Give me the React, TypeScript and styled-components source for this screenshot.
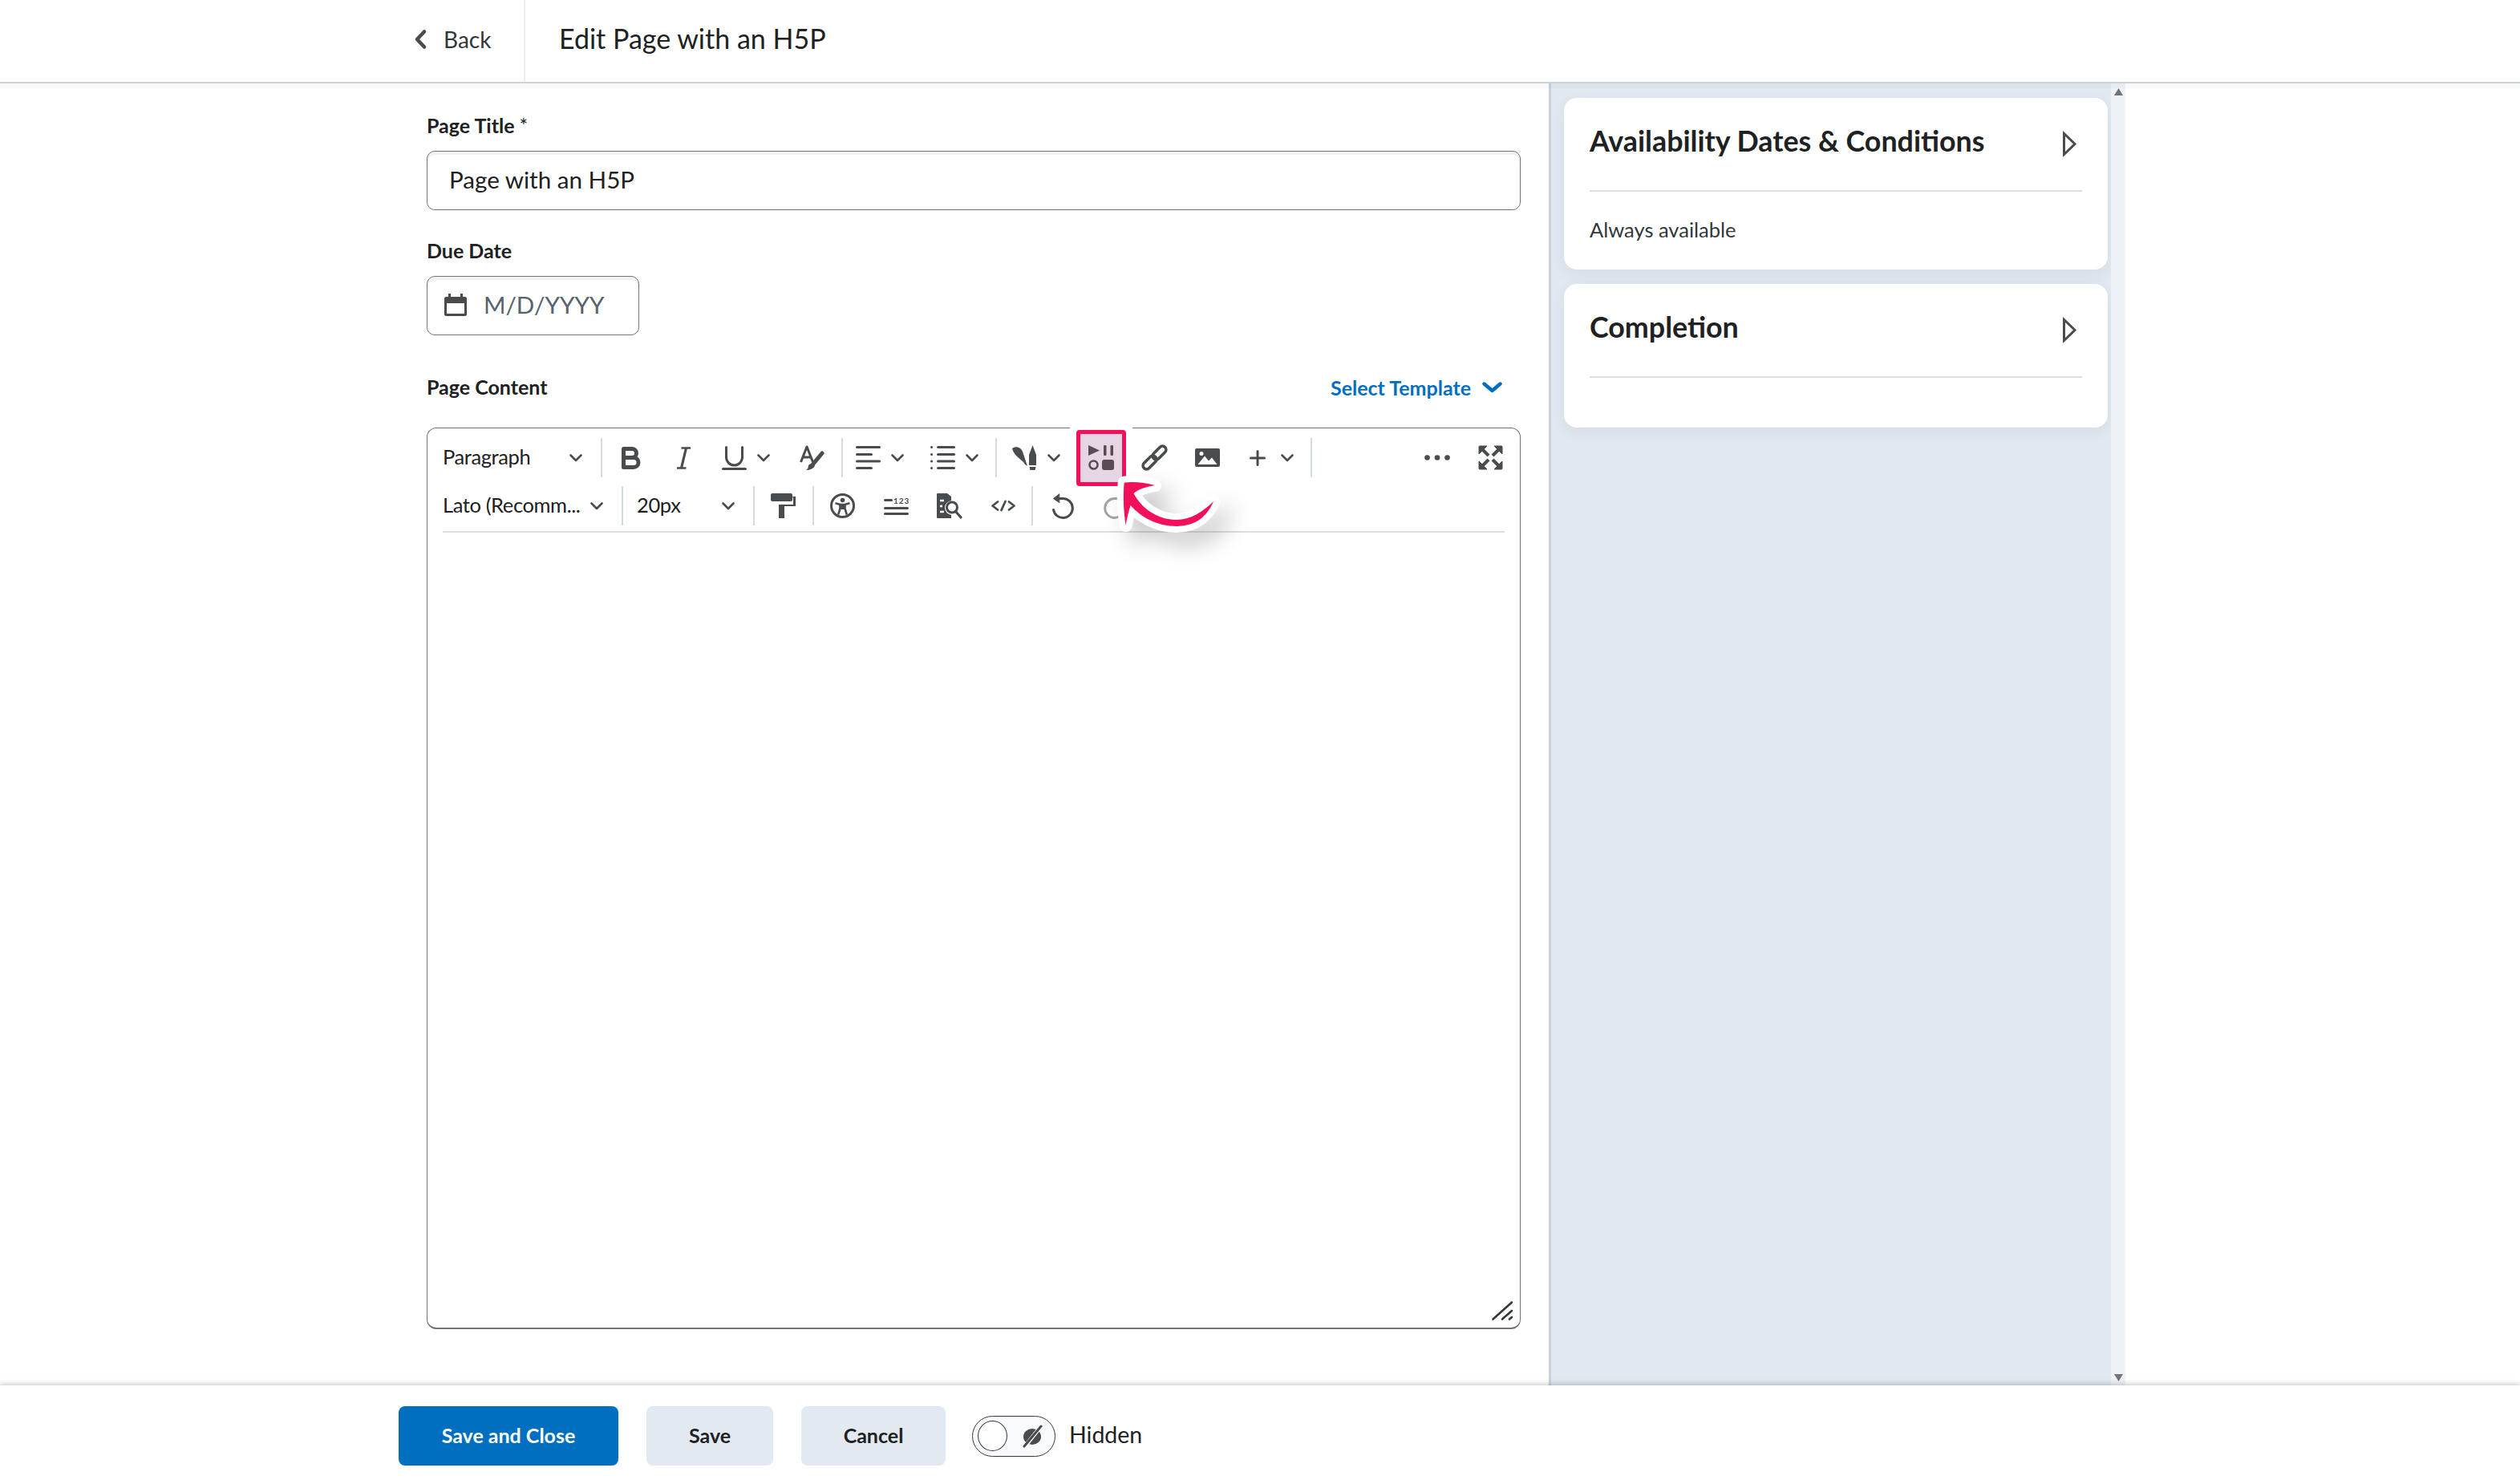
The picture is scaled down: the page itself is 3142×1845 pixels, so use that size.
import React from 'react'
import styled, { createGlobalStyle } from 'styled-components'

const ink = '#202122'
const iconInk = '#494c4e'
const line = '#cdd5dc'
const blue = '#006fbf'

const GlobalStyle = createGlobalStyle`
  html, body {
    margin: 0;
    padding: 0;
    background: #fff;
    overflow: hidden;
  }
  body {
    font-family: Lato, "Open Sans", sans-serif;
    color: ${ink};
  }
`

const Page = styled.div`
  display: flex;
  flex-direction: column;
  width: 100vw;
  height: 100vh;
`

const Header = styled.header`
  position: relative;
  z-index: 1;
  display: flex;
  flex: 0 0 104px;
  box-sizing: border-box;
  padding-left: 517px;
  border-bottom: 2px solid ${line};
  box-shadow: 0 6px 0 rgba(73, 76, 78, 0.03);
`

const BackLink = styled.div`
  display: flex;
  align-items: center;
  gap: 21px;
  box-sizing: border-box;
  width: 138px;
  padding-bottom: 5px;
  border-right: 2px solid #eaeef2;
  font-size: 28px;
  color: #33373a;
`

const Title = styled.h1`
  margin: 0 0 7px 42px;
  align-self: center;
  font-size: 34px;
  font-weight: 400;
  color: ${ink};
`

const Main = styled.div`
  display: flex;
  flex: 1;
  min-height: 0;
  padding-left: 532px;
`

const Form = styled.div`
  display: flex;
  flex-direction: column;
  flex: 0 0 1364px;
  padding-top: 38px;
`

const Label = styled.div`
  font-size: 25px;
  font-weight: 700;
  line-height: 29px;
  margin-bottom: 17px;
  color: ${ink};
`

const Star = styled.span`
  font-weight: 400;
`

const Field = styled.div<{ $w?: number }>`
  display: flex;
  align-items: center;
  box-sizing: border-box;
  flex: 0 0 74px;
  width: ${(p) => (p.$w ? `${p.$w}px` : '100%')};
  margin-bottom: 36px;
  padding: 0 27px 3px;
  background: #fff;
  border: 1px solid #6e7477;
  border-radius: 10px;
  box-shadow: inset 0 4px 0 rgba(177, 185, 190, 0.2);
  font-size: 29.6px;
  color: ${ink};
`

const DateField = styled(Field)`
  gap: 21px;
  padding: 0 21px 3px;
  margin-bottom: 50px;
  color: #56626c;
`

const ContentHead = styled.div`
  display: flex;
  justify-content: space-between;
  margin-bottom: 19px;
`

const TemplateLink = styled.div`
  display: flex;
  align-items: center;
  gap: 14px;
  height: 30px;
  padding-right: 23px;
  font-size: 25px;
  font-weight: 700;
  color: ${blue};
`

const Editor = styled.div`
  position: relative;
  box-sizing: border-box;
  flex: 0 0 1124px;
  border: 1px solid #6e7477;
  border-bottom-width: 2px;
  border-radius: 12px;
`

const Toolbar = styled.div`
  display: flex;
  flex-direction: column;
  gap: 11px;
  margin: 0 19px;
  padding: 12px 2px 7px 0;
  border-bottom: 2px solid #d9dfe5;
`

const ToolRow = styled.div`
  display: flex;
  align-items: center;
  height: 49px;
`

const Select = styled.div<{ $w: number; $ml?: number }>`
  display: flex;
  align-items: center;
  justify-content: space-between;
  flex: 0 0 ${(p) => p.$w}px;
  margin-left: ${(p) => p.$ml ?? 0}px;
  font-size: 25.5px;
  letter-spacing: -0.4px;
  color: ${ink};
  white-space: nowrap;
`

const SelectText = styled.span`
  margin-top: -3px;
`

const Sep = styled.span<{ $ml: number }>`
  flex: 0 0 2px;
  height: 49px;
  margin-left: ${(p) => p.$ml}px;
  background: #d3dbe2;
`

const Glyph = styled.svg<{ $ml?: number }>`
  display: block;
  flex: none;
  overflow: visible;
  margin-left: ${(p) => p.$ml ?? 0}px;
  color: ${iconInk};
`

const FaintGlyph = styled(Glyph)`
  color: #a2a5a7;
`

const H5pButton = styled.div`
  position: relative;
  z-index: 2;
  display: flex;
  align-items: center;
  justify-content: center;
  box-sizing: border-box;
  flex: 0 0 62px;
  height: 70px;
  margin-left: 20px;
  background: #e6d6e3;
  border: 5px solid #f2105a;
  border-radius: 4px;
  box-shadow: 0 0 0 9px #fff;
  color: #5c4a57;
`

const PushRight = styled.span`
  flex: 1;
`

/* annotation arrow that lies over the toolbar */
const CalloutArrow = styled.svg`
  position: absolute;
  z-index: 3;
  left: 847px;
  top: 56px;
  overflow: visible;
  filter: drop-shadow(14px 16px 14px rgba(0, 0, 0, 0.22));
`

const Resizer = styled.svg`
  position: absolute;
  right: 9px;
  bottom: 9px;
`

const SideWrap = styled.div`
  display: flex;
  flex: 0 0 719px;
  margin-left: 35px;
`

const Side = styled.aside`
  display: flex;
  flex-direction: column;
  gap: 18px;
  flex: 0 0 701px;
  box-sizing: border-box;
  padding: 18px 4px 0 16px;
  background: #e2e8f0;
  border-left: 3px solid #c8d2dd;
`

const Card = styled.section<{ $h: number }>`
  box-sizing: border-box;
  height: ${(p) => p.$h}px;
  padding: 0 32px;
  background: #fff;
  border-radius: 16px;
  box-shadow: 0 6px 18px rgba(73, 76, 78, 0.07);
`

const CardHead = styled.div`
  display: flex;
  align-items: center;
  justify-content: space-between;
  height: 115px;
  padding-right: 7px;
  border-bottom: 2px solid #d9dfe5;
`

const CardTitle = styled.h2`
  margin: -8px 0 0;
  font-size: 35.8px;
  font-weight: 700;
  color: ${ink};
`

const CardText = styled.p`
  margin: 32px 0 0;
  font-size: 25.5px;
  line-height: 30px;
  color: #33373a;
`

const Scroller = styled.div`
  display: flex;
  flex-direction: column;
  justify-content: space-between;
  align-items: center;
  flex: 0 0 18px;
  padding: 6px 0 5px;
  background: #eef1f6;
`

const Footer = styled.footer`
  position: relative;
  z-index: 1;
  display: flex;
  align-items: center;
  flex: 0 0 118px;
  box-sizing: border-box;
  padding: 26px 0 18px 497px;
  background: #fff;
  box-shadow: 0 -2px 6px rgba(73, 76, 78, 0.28);
`

const Button = styled.button<{ $w: number; $primary?: boolean; $ml?: number }>`
  flex: 0 0 ${(p) => p.$w}px;
  height: 74px;
  margin-left: ${(p) => p.$ml ?? 0}px;
  padding: 0 0 3px;
  border: 0;
  border-radius: 8px;
  background: ${(p) => (p.$primary ? blue : '#e3e9f1')};
  color: ${(p) => (p.$primary ? '#fff' : ink)};
  font-family: inherit;
  font-size: 25px;
  font-weight: 700;
`

const Toggle = styled.div`
  display: flex;
  align-items: center;
  box-sizing: border-box;
  flex: 0 0 104px;
  height: 51px;
  margin-left: 33px;
  padding-left: 6px;
  background: #f9fafe;
  border: 1px solid #33373a;
  border-radius: 26px;
`

const Knob = styled.span`
  flex: 0 0 37px;
  box-sizing: border-box;
  height: 38px;
  background: #fff;
  border: 1px solid #33373a;
  border-radius: 50%;
`

const ToggleLabel = styled.span`
  margin: 0 0 4px 17px;
  font-size: 28.5px;
  color: ${ink};
`

const Chevron = ({ ml }: { ml?: number }) => (
  <Glyph $ml={ml} width="16" height="10" viewBox="0 0 16 10" fill="none" stroke="currentColor" strokeWidth="2.6" strokeLinecap="round" strokeLinejoin="round">
    <path d="M1.5 1.5 8 8l6.5-6.5" />
  </Glyph>
)

const OutlineArrow = () => (
  <Glyph width="17" height="31" viewBox="0 0 17 31" fill="none" stroke="currentColor" strokeWidth="3" strokeLinejoin="miter">
    <path d="M1.5 2.5v26L15 15.5z" />
  </Glyph>
)

export default function App() {
  return (
    <Page>
      <GlobalStyle />
      <Header>
        <BackLink>
          <Glyph width="15" height="24" viewBox="0 0 15 24" fill="none" stroke="currentColor" strokeWidth="4.6" strokeLinecap="round" strokeLinejoin="round">
            <path d="M12 2.5 3 12l9 9.5" />
          </Glyph>
          Back
        </BackLink>
        <Title>Edit Page with an H5P</Title>
      </Header>

      <Main>
        <Form>
          <Label>
            Page Title <Star>*</Star>
          </Label>
          <Field>Page with an H5P</Field>
          <Label>Due Date</Label>
          <DateField $w={265}>
            <Glyph width="28" height="28" viewBox="0 0 28 28" fill="currentColor">
              <path d="M5 0h3v4h12V0h3v4h3a2 2 0 0 1 2 2v20a2 2 0 0 1-2 2H2a2 2 0 0 1-2-2V6a2 2 0 0 1 2-2h3zM3 12v13h22V12z" fillRule="evenodd" />
            </Glyph>
            M/D/YYYY
          </DateField>
          <ContentHead>
            <Label>Page Content</Label>
            <TemplateLink>
              Select Template
              <svg width="25" height="14" viewBox="0 0 25 14" fill="none" stroke={blue} strokeWidth="4.4" strokeLinecap="round" strokeLinejoin="round">
                <path d="M2.5 2.5 12.5 11l10-8.5" />
              </svg>
            </TemplateLink>
          </ContentHead>

          <Editor>
            <Toolbar>
              <ToolRow>
                <Select $w={174}>
                  <SelectText>Paragraph</SelectText>
                  <Chevron />
                </Select>
                <Sep $ml={23} />
                <Glyph $ml={24} width="23" height="28" viewBox="0 0 23 28" fill="none" stroke="currentColor" strokeWidth="5" strokeLinejoin="round">
                  <path d="M2.5 2.5H13a5.5 5.5 0 0 1 0 11H2.5zM2.5 13.5H15a6 6 0 0 1 0 12H2.5z" />
                </Glyph>
                <Glyph $ml={46} width="17" height="28" viewBox="0 0 17 28" fill="none" stroke="currentColor" strokeWidth="2.6">
                  <path d="M5.5 1.5H17M0 26.5h11.5" />
                  <path d="M11.5 1.5 5.5 26.5" strokeWidth="3.2" />
                </Glyph>
                <Glyph $ml={39} width="31" height="30" viewBox="0 0 31 30" fill="none" stroke="currentColor" strokeWidth="3" strokeLinecap="round">
                  <path d="M5.5 1.5V14a10 10 0 0 0 20 0V1.5M1.5 28.5h28" />
                </Glyph>
                <Chevron ml={13} />
                <Glyph $ml={37} width="30" height="32" viewBox="0 0 30 32" fill="none" stroke="currentColor" strokeWidth="3" strokeLinejoin="round">
                  <path d="M1.5 21 9 2l7.5 19M4.5 15h9" />
                  <path d="M28 10 15.5 25" strokeWidth="5" strokeLinecap="round" />
                  <path d="M11 25c3-3 7-2 8 0-1 4-6 6-11 6 2-1 3-3 3-6z" fill="currentColor" stroke="none" />
                </Glyph>
                <Sep $ml={22} />
                <Glyph $ml={16} width="31" height="29" viewBox="0 0 31 29" fill="none" stroke="currentColor" strokeWidth="3" strokeLinecap="round">
                  <path d="M1.5 1.5h28M1.5 10.5h18M1.5 19h28M1.5 27.5h18" />
                </Glyph>
                <Chevron ml={13} />
                <Glyph $ml={33} width="31" height="29" viewBox="0 0 31 29" fill="none" stroke="currentColor" strokeWidth="3" strokeLinecap="round">
                  <path d="M9.5 1.5h20M9.5 10.5h20M9.5 19h20M9.5 27.5h20M1.5 1.5h.1M1.5 10.5h.1M1.5 19h.1M1.5 27.5h.1" />
                </Glyph>
                <Chevron ml={13} />
                <Sep $ml={21} />
                <Glyph $ml={19} width="30" height="31" viewBox="0 0 30 31" fill="currentColor">
                  <path d="M0 4c5-4 11-1 13 4l6 18-3-2C12 17 3 15 0 4z" />
                  <path d="M25.5 0 30 12v13h-9V12z" />
                  <path d="M21.5 27h8l-1 4h-6z" />
                </Glyph>
                <Chevron ml={14} />
                <H5pButton>
                  <svg width="32" height="31" viewBox="0 0 32 31" fill="currentColor">
                    <path d="M0 0l14 6.5L0 13z" />
                    <rect x="19" width="3.5" height="13" rx="1.2" />
                    <rect x="27.5" width="3.5" height="13" rx="1.2" />
                    <circle cx="6.5" cy="24.5" r="5" fill="none" stroke="currentColor" strokeWidth="2.6" />
                    <rect x="17" y="18" width="15" height="13" rx="3" />
                  </svg>
                </H5pButton>
                <Glyph $ml={20} width="31" height="31" viewBox="0 0 31 31" fill="none" stroke="currentColor" strokeWidth="3.6">
                  <g transform="rotate(-45 15.5 15.5)">
                    <rect x="-3" y="11" width="20" height="9" rx="4.5" />
                    <rect x="14" y="11" width="20" height="9" rx="4.5" />
                  </g>
                </Glyph>
                <Glyph $ml={35} width="31" height="23" viewBox="0 0 31 23" fill="currentColor">
                  <rect width="31" height="23" rx="2" />
                  <path d="M3.5 20 12 9.5l5 6 4-4 6.5 8.5z" fill="#fff" />
                  <circle cx="8" cy="6.5" r="2.5" fill="#fff" />
                </Glyph>
                <Glyph $ml={37} width="20" height="20" viewBox="0 0 20 20" fill="none" stroke="currentColor" strokeWidth="3" strokeLinecap="round">
                  <path d="M10 1.5v17M1.5 10h17" />
                </Glyph>
                <Chevron ml={19} />
                <Sep $ml={21} />
                <PushRight />
                <Glyph width="32" height="7" viewBox="0 0 32 7" fill="currentColor">
                  <circle cx="3.5" cy="3.5" r="3.3" />
                  <circle cx="16" cy="3.5" r="3.3" />
                  <circle cx="28.5" cy="3.5" r="3.3" />
                </Glyph>
                <Glyph $ml={35} width="31" height="31" viewBox="0 0 31 31" fill="currentColor" stroke="currentColor">
                  <path d="M1 2a1 1 0 0 1 1-1h9L1 11z" />
                  <path d="M4 4l9 9" strokeWidth="4" />
                  <path d="M30 2a1 1 0 0 0-1-1h-9l10 10z" />
                  <path d="M27 4l-9 9" strokeWidth="4" />
                  <path d="M1 29a1 1 0 0 0 1 1h9L1 20z" />
                  <path d="M4 27l9-9" strokeWidth="4" />
                  <path d="M30 29a1 1 0 0 1-1 1h-9l10-10z" />
                  <path d="M27 27l-9-9" strokeWidth="4" />
                </Glyph>
              </ToolRow>

              <ToolRow>
                <Select $w={200}>
                  <SelectText>Lato (Recomm...</SelectText>
                  <Chevron />
                </Select>
                <Sep $ml={23} />
                <Select $w={122} $ml={17}>
                  <SelectText>20px</SelectText>
                  <Chevron />
                </Select>
                <Sep $ml={23} />
                <Glyph $ml={20} width="31" height="31" viewBox="0 0 31 31" fill="currentColor">
                  <rect width="27" height="10" rx="2" />
                  <path d="M27 4h4v12H17v15H10V14h18V6z" />
                </Glyph>
                <Sep $ml={21} />
                <Glyph $ml={20} width="31" height="31" viewBox="0 0 31 31" fill="none" stroke="currentColor" strokeWidth="3">
                  <circle cx="15.5" cy="15.5" r="14" />
                  <circle cx="15.5" cy="8.5" r="2.8" fill="currentColor" stroke="none" />
                  <path d="M7.5 12.5l5 1.5h6l5-1.5M12.5 14v5l-2 6.5M18.5 14v5l2 6.5" strokeWidth="2.6" strokeLinecap="round" />
                  <rect x="12.5" y="14" width="6" height="6" fill="currentColor" stroke="none" />
                </Glyph>
                <Glyph $ml={36} width="31" height="22" viewBox="0 0 31 22" fill="none" stroke="currentColor" strokeWidth="3" strokeLinecap="round">
                  <path d="M1.5 3.5h8M1.5 13.5h28M1.5 20.5h28" />
                  <text x="12" y="8" fontSize="10" fontWeight="700" fill="currentColor" stroke="none" fontFamily="Lato" letterSpacing="1">123</text>
                </Glyph>
                <Glyph $ml={35} width="31" height="31" viewBox="0 0 31 31">
                  <path d="M0 1a1 1 0 0 1 1-1h12l5 4v27H1a1 1 0 0 1-1-1z" fill="currentColor" />
                  <circle cx="19" cy="18" r="9" fill="#fff" />
                  <path d="M4 9h5M4 16h3M4 23h5" stroke="#fff" strokeWidth="2.5" />
                  <circle cx="19" cy="17.5" r="6.5" fill="none" stroke="currentColor" strokeWidth="3" />
                  <path d="M23.5 22.5 30 30" stroke="currentColor" strokeWidth="3.2" strokeLinecap="round" />
                </Glyph>
                <Glyph $ml={37} width="30" height="13" viewBox="0 0 30 13" fill="none" stroke="currentColor" strokeWidth="2.8" strokeLinecap="round" strokeLinejoin="round">
                  <path d="M8 1.5 1.5 6.5 8 11.5M22 1.5l6.5 5-6.5 5M17.5 1l-5 11" />
                </Glyph>
                <Sep $ml={20} />
                <Glyph $ml={23} width="28" height="31" viewBox="0 0 28 31" fill="none" stroke="currentColor" strokeWidth="3" strokeLinecap="round">
                  <path d="M8 6.5h6a12 12 0 1 1-11.5 14" />
                  <path d="M9.5 1 2.5 6.5l7 5z" fill="currentColor" strokeLinejoin="round" strokeWidth="1" />
                </Glyph>
                <FaintGlyph $ml={37} width="28" height="31" viewBox="0 0 28 31" fill="none" stroke="currentColor" strokeWidth="3" strokeLinecap="round">
                  <path d="M20 6.5h-6a12 12 0 1 0 11.5 14" />
                </FaintGlyph>
              </ToolRow>
            </Toolbar>

            <CalloutArrow width="150" height="80" viewBox="0 0 150 80">
              <path
                d="M21.7 11.7C33 10 48 12 60 15 50 17 40 19 33.5 25 42 42 62 58 87 58c17 0 33-10 46-23-7 17-21 31-46 31-25 0-45-12-57.4-26C27 48 25 56 23.6 65 21 48 20 28 21.7 11.7z"
                fill="#f2105a"
                stroke="#fff"
                strokeWidth="16"
                strokeLinejoin="round"
                paintOrder="stroke"
              />
            </CalloutArrow>
            <Resizer width="26" height="24" viewBox="0 0 26 24" fill="none" stroke="#33373a" strokeWidth="2.6" strokeLinecap="round">
              <path d="M1.5 22.5 25 1.5M13 22.5 25 12M22 22.5l3-2.5" />
            </Resizer>
          </Editor>
        </Form>

        <SideWrap>
          <Side>
            <Card $h={214}>
              <CardHead>
                <CardTitle>Availability Dates &amp; Conditions</CardTitle>
                <OutlineArrow />
              </CardHead>
              <CardText>Always available</CardText>
            </Card>
            <Card $h={179}>
              <CardHead>
                <CardTitle>Completion</CardTitle>
                <OutlineArrow />
              </CardHead>
            </Card>
          </Side>
          <Scroller>
            <svg width="11" height="9" viewBox="0 0 11 9" fill="#6e7477">
              <path d="M5.5 0 11 9H0z" />
            </svg>
            <svg width="11" height="9" viewBox="0 0 11 9" fill="#6e7477">
              <path d="M0 0h11L5.5 9z" />
            </svg>
          </Scroller>
        </SideWrap>
      </Main>

      <Footer>
        <Button $w={274} $primary>Save and Close</Button>
        <Button $w={158} $ml={35}>Save</Button>
        <Button $w={180} $ml={35}>Cancel</Button>
        <Toggle>
          <Knob />
          <Glyph $ml={16} width="29" height="27" viewBox="0 0 29 27" fill="currentColor">
            <ellipse cx="15" cy="14" rx="11" ry="10" />
            <circle cx="18" cy="10" r="1.8" fill="#fff" />
            <path d="M26 1 6 26" stroke="#f9fafe" strokeWidth="5" />
            <path d="M26 1 5 26" stroke="currentColor" strokeWidth="3" strokeLinecap="round" />
          </Glyph>
        </Toggle>
        <ToggleLabel>Hidden</ToggleLabel>
      </Footer>
    </Page>
  )
}
